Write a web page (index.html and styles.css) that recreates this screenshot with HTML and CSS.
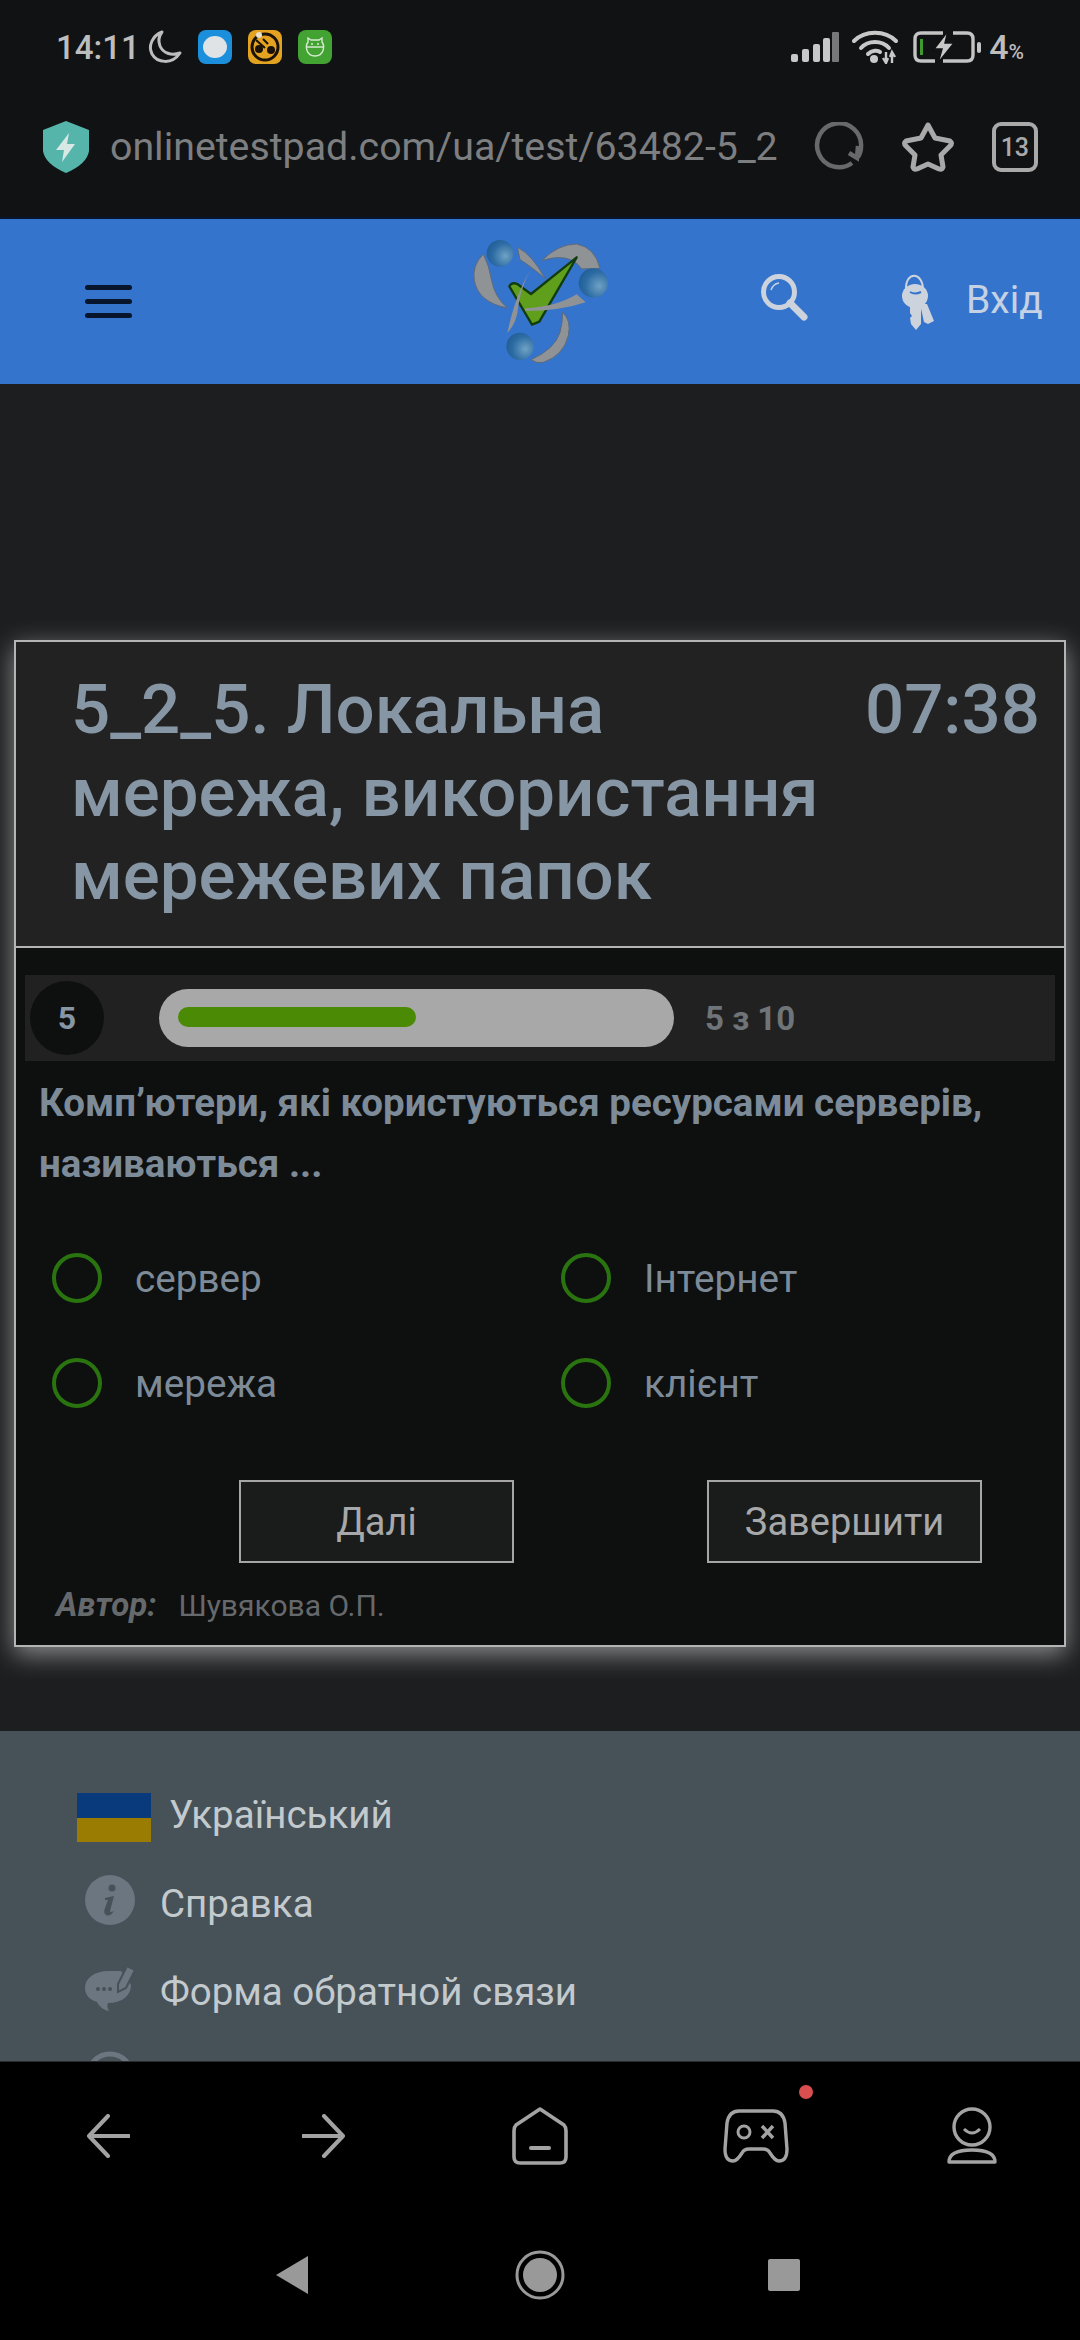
FILE: index.html
```html
<!DOCTYPE html>
<html lang="uk">
<head>
    <meta charset="UTF-8">
    <meta name="viewport" content="width=device-width, initial-scale=1.0">
    <title>5_2_5. Локальна мережа</title>
    <link rel="stylesheet" href="styles.css">
</head>
<body>
<div class="screen">
    <div class="topbar">
        <div class="status">
            <span class="time">14:11</span>
            <svg class="moon" width="36" height="36" viewBox="0 0 36 36"><path d="M15 3 C5 7 1 17 5 25 C10 34 25 36 33 24 C24 27 16 24 13 17 C11 12 12 7 15 3 Z" fill="none" stroke="#bdbdbd" stroke-width="3" stroke-linejoin="round"/></svg>
            <svg class="app" width="34" height="34" viewBox="0 0 34 34"><rect width="34" height="34" rx="8" fill="#1b8fdc"/><ellipse cx="17" cy="17" rx="12" ry="11" fill="#dfe3e6"/></svg>
            <svg class="app" width="34" height="34" viewBox="0 0 34 34"><rect width="34" height="34" rx="8" fill="#e3a21f"/><circle cx="17" cy="17" r="13" fill="none" stroke="#1a1208" stroke-width="3"/><circle cx="11" cy="19" r="4" fill="#1a1208"/><circle cx="23" cy="20" r="4" fill="#1a1208"/><path d="M8 10 L17 18 M15 9 L20 14" stroke="#1a1208" stroke-width="2"/><circle cx="11" cy="5" r="3" fill="#e8e0c8"/></svg>
            <svg class="app" width="34" height="34" viewBox="0 0 34 34"><rect width="34" height="34" rx="8" fill="#42a232"/><path d="M10 12 L10 8 L13 10 L21 10 L24 8 L24 12 C27 16 26 26 17 26 C8 26 7 16 10 12 Z M9 17 L25 17" fill="none" stroke="#d5ead0" stroke-width="1.4"/><circle cx="14" cy="14" r="1" fill="#d5ead0"/><circle cx="20" cy="14" r="1" fill="#d5ead0"/></svg>
            <div class="status-right">
                <svg class="signal" width="48" height="30" viewBox="0 0 48 30"><g fill="#c8c8c8"><rect x="0" y="22" width="7" height="8" rx="2"/><rect x="11" y="17" width="7" height="13" rx="2"/><rect x="22" y="12" width="7" height="18" rx="2"/><rect x="32" y="6" width="7" height="24" rx="2"/></g><rect x="41" y="0" width="7" height="30" rx="1" fill="#77787a"/></svg>
                <svg class="wifi" width="46" height="34" viewBox="0 0 46 34"><g fill="none" stroke="#c8c8c8" stroke-width="4" stroke-linecap="round"><path d="M2 11 C13 0 33 0 44 11"/><path d="M9 18 C16 10 30 10 37 18"/><path d="M16 24 C20 20 26 20 28 22"/></g><circle cx="22" cy="29" r="4" fill="#c8c8c8"/><path d="M34 22 L34 33 M40 22 L40 33 M31 28 L34 33 L36 28 M38 27 L40 22 L43 27" stroke="#c8c8c8" stroke-width="2.4" fill="none"/></svg>
                <svg class="battery" width="68" height="32" viewBox="0 0 68 32"><path d="M30 2 L8 2 Q2 2 2 8 L2 24 Q2 30 8 30 L22 30 M40 2 L54 2 Q60 2 60 8 L60 24 Q60 30 54 30 L30 30" fill="none" stroke="#c4c4c4" stroke-width="3.4"/><rect x="7" y="8" width="3" height="16" fill="#3f9a2c"/><rect x="64" y="11" width="4" height="11" rx="2" fill="#c4c4c4"/><path d="M35 0 L21 18 L29 18 L25 32 L41 12 L32 12 Z" fill="#c8c8c8" stroke="#111214" stroke-width="1.5"/></svg>
                <span class="battery-pct">4<small>%</small></span>
            </div>
        </div>
        <div class="urlbar">
            <svg class="shield" width="46" height="52" viewBox="0 0 46 52"><path d="M23 0 L46 9 L46 30 Q44 43 23 52 Q2 43 0 30 L0 9 Z" fill="#55b5aa"/><path d="M26 12 L13 29 L21 29 L19 41 L32 23 L24 23 Z" fill="#d8e8e5"/></svg>
            <div class="url">onlinetestpad.com/ua/test/63482-5_2</div>
            <svg class="reload" width="50" height="50" viewBox="0 0 50 50"><path d="M38 41 A22 22 0 1 1 47 25 C47 29 46 32 44 35 M44 24 L43 36 L35 31" fill="none" stroke="#68696b" stroke-width="4.5"/></svg>
            <svg class="star" width="54" height="52" viewBox="0 0 54 52"><path d="M27 4 L34 17 L49 20 Q52 22 49 25 L40 34 L42 46 Q41 49 38 48 L27 43 L16 48 Q13 49 12 46 L14 34 L5 25 Q2 22 5 20 L20 17 Z" fill="none" stroke="#a9a9aa" stroke-width="5" stroke-linejoin="round"/></svg>
            <div class="tabs">13</div>
        </div>
    </div>

    <div class="page">
        <header class="site-header">
            <div class="burger"><span></span><span></span><span></span></div>
            <svg class="logo" width="137" height="125" viewBox="129 90 411 375">
                <defs>
                    <radialGradient id="ball" cx="0.7" cy="0.6" r="0.8"><stop offset="0" stop-color="#6fa2c4"/><stop offset="0.6" stop-color="#2c6ba3"/><stop offset="1" stop-color="#1e5a92"/></radialGradient>
                </defs>
                <g fill="#8f9396" stroke="#5c6a7c" stroke-width="3">
                    <path d="M160 135 Q125 170 133 215 Q145 280 232 297 Q195 265 185 215 Q178 170 160 135 Z"/>
                    <path d="M262 115 Q305 135 345 208 Q300 170 270 152 Z"/>
                    <path d="M335 155 Q385 105 440 105 Q495 115 510 178 L455 180 Q420 128 335 155 Z"/>
                    <path d="M398 310 Q425 335 415 380 Q400 440 340 460 Q320 465 303 452 Q375 420 390 370 Q398 340 398 310 Z"/>
                </g>
                <path d="M238 232 Q245 218 262 225 L303 255 L440 145 L328 338 L306 347 Z" fill="#5f9f1c" stroke="#123c10" stroke-width="7" stroke-linejoin="round"/>
                <path d="M285 298 Q380 293 440 256 L467 280 Q390 306 285 306 Z" fill="#8f9396"/>
                <path d="M300 185 Q255 260 232 372 Q262 340 265 290 Q275 230 300 185 Z" fill="#8f9396"/>
                <circle cx="210" cy="133" r="40" fill="url(#ball)"/>
                <circle cx="490" cy="222" r="44" fill="url(#ball)"/>
                <circle cx="270" cy="412" r="41" fill="url(#ball)"/>
            </svg>
            <svg class="search" width="48" height="48" viewBox="0 0 48 48"><circle cx="19" cy="19" r="15.5" fill="none" stroke="#cdd3dd" stroke-width="5"/><path d="M30 30 L44 44" stroke="#cdd3dd" stroke-width="7" stroke-linecap="round"/><path d="M11 17 Q13 11 19 10" fill="none" stroke="#cdd3dd" stroke-width="1.5"/></svg>
            <svg class="keys" width="32" height="56" viewBox="0 0 32 56"><path d="M4 16 C3 -3 21 -3 21 16" fill="none" stroke="#cdd3dd" stroke-width="2"/><ellipse cx="13" cy="22" rx="13" ry="12" fill="#cdd3dd"/><path d="M8 30 L19 30 L19 50 L14 56 L9 50 L8 44 L10 42 L8 39 Z" fill="#cdd3dd"/><path d="M18 30 L25 30 L32 47 L26 50 L22 48 Z" fill="#cdd3dd"/><path d="M8 18 Q13 21 19 18" fill="none" stroke="#3574cc" stroke-width="2"/></svg>
            <span class="login">Вхід</span>
        </header>

        <main class="content">
            <section class="card">
                <div class="card-head">
                    <h1>5_2_5. Локальна мережа, використання мережевих папок</h1>
                    <div class="timer">07:38</div>
                </div>
                <div class="card-body">
                    <div class="progress-row">
                        <div class="num">5</div>
                        <div class="bar"><div class="bar-fill"></div></div>
                        <div class="count">5 з 10</div>
                    </div>
                    <p class="question">Комп’ютери, які користуються ресурсами серверів, називаються ...</p>
                    <div class="answers">
                        <label class="answer"><span class="radio"></span>сервер</label>
                        <label class="answer"><span class="radio"></span>Інтернет</label>
                        <label class="answer"><span class="radio"></span>мережа</label>
                        <label class="answer"><span class="radio"></span>клієнт</label>
                    </div>
                    <div class="buttons">
                        <button type="button">Далі</button>
                        <button type="button">Завершити</button>
                    </div>
                    <div class="author"><b>Автор:</b><span>Шувякова О.П.</span></div>
                </div>
            </section>
        </main>

        <footer class="site-footer">
            <div class="foot-item lang"><div class="flag"></div>Український</div>
            <div class="foot-item">
                <svg width="50" height="50" viewBox="0 0 50 50"><circle cx="25" cy="25" r="25" fill="#6b7680"/><circle cx="27" cy="13" r="3.5" fill="#475158"/><path d="M20 23 L29 21 L25 36 Q25 38 29 36 Q25 42 21 40 Q18 38 20 33 L23 25 L20 25 Z" fill="#475158"/></svg>
                Справка
            </div>
            <div class="foot-item">
                <svg width="50" height="46" viewBox="0 0 50 46"><path d="M24 6 C8 6 0 14 0 23 C0 30 5 35 12 37 C14 41 18 45 24 46 C22 43 22 40 23 38 C38 38 46 30 46 20 L36 6 Z" fill="#6b7680"/><path d="M33 19 L42 1 L50 5 L41 23 L33 27 Z" fill="#6b7680" stroke="#475158" stroke-width="2"/><circle cx="13" cy="24" r="2" fill="#475158"/><circle cx="19" cy="24" r="2" fill="#475158"/><circle cx="25" cy="24" r="2" fill="#475158"/></svg>
                Форма обратной связи
            </div>
            <div class="foot-item">
                <svg width="50" height="50" viewBox="0 0 50 50"><circle cx="25" cy="25" r="22" fill="none" stroke="#6b7680" stroke-width="5"/></svg>
            </div>
        </footer>
    </div>

    <nav class="browser-nav">
        <svg width="44" height="44" viewBox="0 0 44 44"><path d="M22 2 L3 22 L22 42 M3 22 L43 22" fill="none" stroke="#a3a3a3" stroke-width="4" stroke-linecap="round" stroke-linejoin="round"/></svg>
        <svg width="44" height="44" viewBox="0 0 44 44"><path d="M22 2 L41 22 L22 42 M41 22 L1 22" fill="none" stroke="#a3a3a3" stroke-width="4" stroke-linecap="round" stroke-linejoin="round"/></svg>
        <svg width="56" height="58" viewBox="0 0 56 58"><path d="M28 2 L52 18 Q54 20 54 24 L54 50 Q54 56 48 56 L8 56 Q2 56 2 50 L2 24 Q2 20 4 18 Z" fill="none" stroke="#a3a3a3" stroke-width="3.6" stroke-linejoin="round"/><path d="M19 41 L37 41" stroke="#a3a3a3" stroke-width="4" stroke-linecap="round"/></svg>
        <div class="game">
            <svg width="66" height="54" viewBox="0 0 66 54"><path d="M16 2 L50 2 Q60 2 62 14 L64 40 Q64 52 56 52 Q52 52 47 44 Q45 40 40 40 L26 40 Q21 40 19 44 Q14 52 10 52 Q2 52 2 40 L4 14 Q6 2 16 2 Z" fill="none" stroke="#a3a3a3" stroke-width="3.4"/><circle cx="21" cy="23" r="6" fill="none" stroke="#a3a3a3" stroke-width="3"/><path d="M39 17 L50 29 M50 17 L39 29" stroke="#a3a3a3" stroke-width="3.4"/></svg>
            <span class="dot"></span>
        </div>
        <svg width="50" height="58" viewBox="0 0 50 58"><ellipse cx="25" cy="20" rx="18" ry="18" fill="none" stroke="#a3a3a3" stroke-width="3.4"/><path d="M17 22 Q25 30 33 22" fill="none" stroke="#a3a3a3" stroke-width="3"/><path d="M2 55 Q2 43 25 43 Q48 43 48 55 Z" fill="none" stroke="#a3a3a3" stroke-width="3.4" stroke-linejoin="round"/></svg>
    </nav>

    <div class="system-nav">
        <svg width="32" height="38" viewBox="0 0 32 38"><path d="M32 0 L32 38 L0 19 Z" fill="#999"/></svg>
        <svg class="sys-home" width="50" height="50" viewBox="0 0 50 50"><circle cx="25" cy="25" r="23" fill="none" stroke="#999" stroke-width="3"/><circle cx="25" cy="25" r="17" fill="#999"/></svg>
        <svg width="32" height="32" viewBox="0 0 32 32"><rect width="32" height="32" rx="2" fill="#999"/></svg>
    </div>
</div>
</body>
</html>
```

FILE: styles.css
```css
* {
    box-sizing: border-box;
}
html, body {
    margin: 0;
    padding: 0;
    background: #000;
}
body {
    font-family: Roboto, "Noto Sans", sans-serif;
}
svg {
    display: block;
    flex: none;
}
.screen {
    width: 1080px;
    height: 2340px;
    display: flex;
    flex-direction: column;
    overflow: hidden;
}

/* browser chrome */
.topbar {
    height: 219px;
    background: #111214;
    border-bottom: 2px solid #07162c;
    flex: none;
}
.status {
    height: 94px;
    display: flex;
    align-items: center;
    padding: 0 56px 0 56px;
}
.time {
    font-size: 33px;
    font-weight: 500;
    color: #bdbdbd;
    width: 91px;
}
.moon {
    margin-right: 15px;
}
.app {
    margin-right: 16px;
}
.status-right {
    margin-left: auto;
    display: flex;
    align-items: center;
}
.wifi {
    margin-left: 13px;
}
.battery {
    margin-left: 15px;
}
.battery-pct {
    margin-left: 8px;
    font-size: 34px;
    font-weight: 500;
    color: #bdbdbd;
    white-space: nowrap;
}
.battery-pct small {
    font-size: 21px;
}
.urlbar {
    height: 106px;
    display: flex;
    align-items: center;
    padding: 0 42px 0 43px;
}
.url {
    margin-left: 21px;
    width: 668px;
    white-space: nowrap;
    font-size: 39.3px;
    color: #7d7e80;
}
.reload {
    margin-left: 36px;
}
.star {
    margin-left: 37px;
}
.tabs {
    margin-left: 37px;
    width: 48px;
    height: 50px;
    border: 4px solid #a9a9aa;
    border-radius: 9px;
    color: #a9a9aa;
    font-size: 25px;
    font-weight: 500;
    display: flex;
    align-items: center;
    justify-content: center;
}

/* site */
.page {
    flex: 1;
    min-height: 0;
    overflow: hidden;
    background: #1c1e1f;
}
.site-header {
    height: 165px;
    background: #3574cc;
    display: flex;
    align-items: center;
    padding-left: 85px;
}
.burger {
    width: 47px;
    display: flex;
    flex-direction: column;
    gap: 9px;
}
.burger span {
    height: 5px;
    border-radius: 3px;
    background: #07162c;
}
.logo {
    margin-left: 341px;
    filter: blur(0.7px);
}
.search {
    margin-left: 150px;
    margin-top: -10px;
}
.keys {
    margin-left: 94px;
}
.login {
    margin-left: 32px;
    margin-top: -3px;
    font-size: 39px;
    color: #c6d2e4;
}
.content {
    height: 1347px;
    padding: 256px 14px 0;
}
.card {
    height: 1007px;
    border: 2px solid #b4b4b4;
    background: #0e0f0f;
    box-shadow: 0 7px 24px rgba(255, 255, 255, 0.5);
    display: flex;
    flex-direction: column;
}
.card-head {
    height: 306px;
    flex: none;
    background: #222222;
    border-bottom: 2px solid #b4b4b4;
    display: flex;
    justify-content: space-between;
    padding: 26px 24px 0 55px;
}
.card-head h1 {
    margin: 0;
    width: 780px;
    font-size: 69px;
    line-height: 83px;
    font-weight: 500;
    color: #8796a5;
}
.timer {
    font-size: 69px;
    line-height: 83px;
    font-weight: 500;
    color: #8796a5;
}
.card-body {
    padding: 27px 9px 0;
}
.progress-row {
    height: 86px;
    background: #212121;
    display: flex;
    align-items: center;
    padding-left: 5px;
}
.num {
    width: 74px;
    height: 74px;
    border-radius: 50%;
    background: #0e0f0f;
    color: #8796a5;
    font-size: 32px;
    font-weight: 700;
    display: flex;
    align-items: center;
    justify-content: center;
}
.bar {
    margin-left: 55px;
    width: 515px;
    height: 58px;
    border-radius: 29px;
    background: #a8a8a8;
    padding: 18px 0 0 19px;
}
.bar-fill {
    width: 238px;
    height: 20px;
    border-radius: 10px;
    background: #4a8a05;
}
.count {
    margin-left: 31px;
    font-size: 33px;
    font-weight: 700;
    color: #6f7478;
}
.question {
    margin: 11px 0 0;
    padding: 0 14px;
    font-size: 38.5px;
    line-height: 61px;
    font-weight: 700;
    color: #7d8b99;
}
.answers {
    margin-top: 59px;
    padding-left: 27px;
    display: grid;
    grid-template-columns: 509px 1fr;
    grid-auto-rows: 105px;
}
.answer {
    display: flex;
    align-items: center;
    gap: 33px;
    height: 50px;
    font-size: 38.7px;
    color: #7d8b99;
}
.radio {
    width: 50px;
    height: 50px;
    flex: none;
    border: 4px solid #2a7410;
    border-radius: 50%;
}
.buttons {
    margin-top: 17px;
    padding-left: 214px;
    display: flex;
    gap: 193px;
}
button {
    width: 275px;
    height: 83px;
    border: 2px solid #a6a6a6;
    background: #1a1b1b;
    color: #a6a8aa;
    font-family: Roboto, sans-serif;
    font-size: 38px;
}
.author {
    margin-top: 22px;
    padding-left: 31px;
    display: flex;
    gap: 22px;
    align-items: baseline;
    font-size: 30px;
    color: #66696c;
}
.author b {
    font-style: italic;
    font-size: 33px;
}
.site-footer {
    height: 330px;
    background: #475158;
    padding: 61px 0 0 85px;
    overflow: hidden;
}
.foot-item {
    display: flex;
    align-items: center;
    gap: 25px;
    height: 50px;
    padding-top: 6px;
    margin-bottom: 38px;
    font-size: 38.5px;
    color: #c3cace;
}
.foot-item svg {
    margin-top: -6px;
}
.lang {
    margin-left: -8px;
    gap: 18px;
    padding: 0 0 6px;
    margin-bottom: 33px;
}
.flag {
    width: 74px;
    height: 49px;
    margin-top: 6px;
    background: linear-gradient(#083a7c 52%, #9a7c02 52%);
}

/* bottom bars */
.browser-nav {
    height: 148px;
    flex: none;
    background: #000;
    border-top: 1px solid #2a2c2e;
    display: grid;
    grid-template-columns: repeat(5, 216px);
    justify-items: center;
    align-items: center;
}
.game {
    position: relative;
}
.dot {
    position: absolute;
    top: -24px;
    right: -24px;
    width: 14px;
    height: 14px;
    border-radius: 50%;
    background: #d94f4f;
}
.system-nav {
    height: 131px;
    flex: none;
    background: #000;
    display: flex;
    align-items: center;
    padding-left: 276px;
}
.sys-home {
    margin: 0 203px 0 207px;
}
```
